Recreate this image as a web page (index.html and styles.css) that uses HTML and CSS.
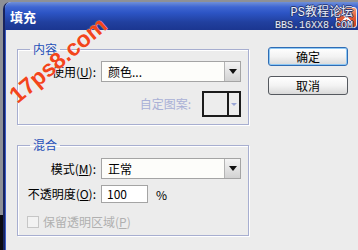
FILE: index.html
```html
<!DOCTYPE html>
<html lang="zh-CN">
<head>
    <meta charset="UTF-8">
    <title>填充</title>
    <link rel="stylesheet" href="styles.css">
</head>
<body>

    <div class="screen">
        <div class="window">
            <!-- Title bar -->
            <div class="titlebar">
                <span class="title">填充</span>
                <span class="close-btn">
                    <svg width="11" height="11" viewBox="0 0 11 11"><path d="M1.5 1.5 L9.5 9.5 M9.5 1.5 L1.5 9.5" stroke="#fff" stroke-width="2" stroke-linecap="square"/></svg>
                </span>
            </div>

            <div class="body">
                <div class="groups">
                    <!-- Content group -->
                    <fieldset class="group group-content">
                        <legend>内容</legend>
                        <div class="row row-use">
                            <span class="label">使用(<u>U</u>):</span>
                            <div class="select">
                                <span class="value">颜色...</span>
                                <span class="arrow"><i></i></span>
                            </div>
                        </div>
                        <div class="row row-pattern">
                            <span class="label-disabled">自定图案:</span>
                            <div class="pattern"><span class="pattern-arrow"><i></i></span></div>
                        </div>
                    </fieldset>

                    <!-- Blending group -->
                    <fieldset class="group group-blend">
                        <legend>混合</legend>
                        <div class="row row-mode">
                            <span class="label">模式(<u>M</u>):</span>
                            <div class="select">
                                <span class="value">正常</span>
                                <span class="arrow"><i></i></span>
                            </div>
                        </div>
                        <div class="row row-opacity">
                            <span class="label">不透明度(<u>O</u>):</span>
                            <div class="input">100</div>
                            <span class="unit">%</span>
                        </div>
                        <div class="row row-check">
                            <span class="checkbox"></span>
                            <span class="label-disabled">保留透明区域(<u>P</u>)</span>
                        </div>
                    </fieldset>
                </div>

                <!-- Buttons -->
                <div class="buttons">
                    <div class="btn btn-default">确定</div>
                    <div class="btn">取消</div>
                </div>
            </div>
        </div>

        <!-- Watermarks -->
        <div class="mark-site">17ps8.com</div>
        <div class="mark-forum">
            <div class="mark-line1"><span class="latin">PS</span>教程论坛</div>
            <div class="mark-line2">BBS.16XX8.COM</div>
        </div>
    </div>

</body>
</html>
```

FILE: styles.css
```css
body {
    margin: 0;
    width: 358px;
    height: 250px;
    overflow: hidden;
    font-family: "Noto Sans CJK SC", sans-serif;
    font-size: 12px;
    color: #000;
    background: linear-gradient(#8e9096 0, #8e9096 215px, #0b0b12 215px);
}
.screen {
    position: relative;
    height: 250px;
    padding: 2px 0 0 3px;
    box-sizing: border-box;
    overflow: hidden;
}
.window {
    height: 248px;
    display: flex;
    flex-direction: column;
    border-left: 2px solid #18245e;
    border-top-left-radius: 7px;
    background-color: #ececec;
}
.titlebar {
    height: 28px;
    flex-shrink: 0;
    display: flex;
    align-items: center;
    justify-content: space-between;
    padding: 2px 1px 0 5px;
    box-sizing: border-box;
    border-top-left-radius: 6px;
    background: linear-gradient(#7090d8, #3f66d2 5px, #2c54c4 11px, #21409f 20px, #1b3690);
}
.title {
    color: #fff;
    font-size: 13px;
    font-weight: bold;
    line-height: 14px;
}
.close-btn {
    width: 19px;
    height: 19px;
    display: flex;
    align-items: center;
    justify-content: center;
    border: 1px solid #f0f0f0;
    border-radius: 3px;
    background: linear-gradient(#f39a78, #e05a36 50%, #c8401e);
}
.body {
    flex: 1;
    display: flex;
    gap: 19px;
    padding: 12px 0 0 11px;
    border-left: 1px solid #3a5ac6;
}
.groups {
    width: 232px;
}
.group {
    margin: 0;
    padding: 0;
    width: 232px;
    box-sizing: border-box;
    border: 1px solid #a7aed0;
    box-shadow: 1px 1px 0 #fff, inset 1px 1px 0 #fff;
}
.group legend {
    margin-left: 12px;
    padding: 0 3px;
    color: #1e4fb8;
    line-height: 14px;
}
.group-content {
    padding-bottom: 7px;
}
.group-blend {
    margin-top: 13px;
    padding-bottom: 6px;
}
.row {
    display: flex;
    align-items: center;
}
.label {
    width: 78px;
    margin-right: 5px;
    text-align: right;
    line-height: 14px;
    white-space: nowrap;
}
.label-disabled {
    color: #a9b0d6;
    line-height: 14px;
    white-space: nowrap;
}
.row-use {
    margin-top: 5px;
}
.row-pattern {
    margin-top: 9px;
    justify-content: flex-end;
    padding-right: 7px;
    gap: 11px;
}
.row-mode {
    margin-top: 6px;
}
.row-opacity {
    margin-top: 6px;
}
.row-check {
    margin-top: 12px;
    padding-left: 9px;
}
.row-check .label-disabled {
    color: #b0b0b0;
    margin-left: 4px;
}
.select {
    width: 140px;
    height: 21px;
    box-sizing: border-box;
    display: flex;
    border: 1px solid #a4a4a4;
    background-color: #fdfdfa;
}
.select .value {
    flex: 1;
    padding-left: 6px;
    line-height: 19px;
}
.select .arrow {
    width: 15px;
    display: flex;
    align-items: center;
    justify-content: center;
    border-left: 1px solid #b4b4b4;
    background: linear-gradient(#f4f4f4, #d2d2d2);
}
.select .arrow i {
    width: 0;
    height: 0;
    border-left: 4px solid transparent;
    border-right: 4px solid transparent;
    border-top: 5px solid #111;
}
.pattern {
    width: 39px;
    height: 26px;
    box-sizing: border-box;
    display: flex;
    justify-content: flex-end;
    border: 2px solid #1c1c1c;
    background-color: #ededed;
}
.pattern-arrow {
    width: 10px;
    display: flex;
    align-items: center;
    justify-content: center;
    border-left: 2px solid #1c1c1c;
}
.pattern-arrow i {
    width: 0;
    height: 0;
    border-left: 3px solid transparent;
    border-right: 3px solid transparent;
    border-top: 3px solid #9aa6d6;
}
.input {
    width: 47px;
    height: 18px;
    box-sizing: border-box;
    padding-left: 5px;
    border: 1px solid #a4a4a4;
    background-color: #fff;
    line-height: 16px;
}
.unit {
    margin-left: 8px;
}
.checkbox {
    width: 12px;
    height: 12px;
    box-sizing: border-box;
    border: 1px solid #c6c6c6;
    background-color: #f2f2f2;
}
.buttons {
    display: flex;
    flex-direction: column;
    gap: 10px;
    padding-top: 5px;
}
.btn {
    width: 80px;
    height: 19px;
    box-sizing: border-box;
    border: 1px solid #55595f;
    border-radius: 3px;
    background: linear-gradient(#ffffff, #f3f3f3 50%, #d9d9d9);
    text-align: center;
    line-height: 17px;
}
.btn-default {
    border-color: #2f6cb4;
    box-shadow: inset 0 0 0 1px #8ec8f4;
}
.mark-site {
    position: absolute;
    left: 58px;
    top: 60px;
    transform: translate(-50%, -50%) rotate(-40deg);
    font-family: "Liberation Sans", Arial, sans-serif;
    font-size: 23px;
    line-height: 24px;
    font-weight: bold;
    color: #f2451c;
    text-shadow: 0 0 1px #fff;
    white-space: nowrap;
}
.mark-forum {
    position: absolute;
    right: 5px;
    top: 4px;
    text-align: right;
    color: #e8eefa;
    font-family: "Liberation Mono", "Noto Sans CJK SC", monospace;
    text-shadow: 1px 0 0 #2a3870, -1px 0 0 #2a3870, 0 1px 0 #2a3870, 0 -1px 0 #2a3870;
}
.mark-line1 {
    font-family: "Noto Sans CJK SC", sans-serif;
    font-size: 12px;
    line-height: 13px;
}
.mark-line1 .latin {
    font-family: "Liberation Mono", monospace;
}
.mark-line2 {
    font-size: 10px;
    line-height: 11px;
}
```
